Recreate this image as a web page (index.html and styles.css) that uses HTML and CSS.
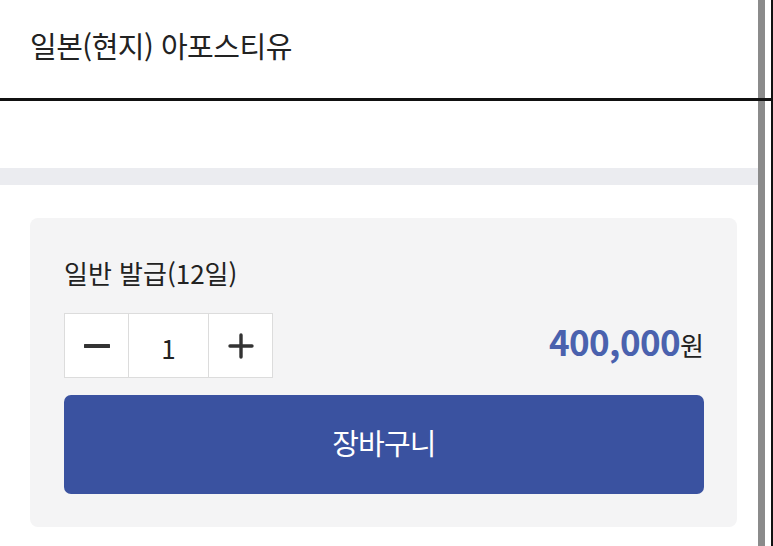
FILE: index.html
```html
<!DOCTYPE html>
<html lang="ko">
<head>
<meta charset="utf-8">
<title>일본(현지) 아포스티유</title>
<link rel="stylesheet" href="styles.css">
</head>
<body>
<div class="frame">
  <header class="head">
    <h1 class="title">일본(현지) 아포스티유</h1>
  </header>
  <div class="rail-gray"></div>
  <div class="rail-black"></div>
  <div class="hline"></div>
  <main class="main">
    <div class="spacer"></div>
    <div class="band"></div>
    <section class="card">
      <div class="label">일반 발급(12일)</div>
      <div class="row">
        <div class="stepper">
          <button class="step minus" type="button" aria-label="감소">
            <svg width="26" height="26" viewBox="0 0 26 26"><path d="M1 13H25" stroke="#333" stroke-width="3.8" stroke-linecap="round"/></svg>
          </button>
          <div class="qty">1</div>
          <button class="step plus" type="button" aria-label="증가">
            <svg width="26" height="26" viewBox="0 0 26 26"><path d="M2 13H24M13 2V24" stroke="#333" stroke-width="3.4" stroke-linecap="round"/></svg>
          </button>
        </div>
        <div class="price"><span class="amount">400,000</span><span class="won">원</span></div>
      </div>
      <button class="cart" type="button">장바구니</button>
    </section>
  </main>
</div>
</body>
</html>
```

FILE: styles.css
```css
* { box-sizing: border-box; }
html, body { margin: 0; padding: 0; background: #fff; }
body {
  font-family: "Noto Sans CJK KR", "Noto Sans", sans-serif;
  color: #222;
  width: 773px;
  height: 546px;
  overflow: hidden;
}
.frame {
  display: grid;
  grid-template-columns: 758px 7px 6px 2px;
  grid-template-rows: 98px 3px 445px;
  height: 546px;
}
.head {
  grid-column: 1;
  grid-row: 1;
  display: flex;
  align-items: center;
  padding: 0 0 8px 30px;
}
.title {
  margin: 0;
  font-size: 29px;
  font-weight: 400;
  letter-spacing: -0.5px;
  color: #222;
}
.rail-gray {
  grid-column: 2;
  grid-row: 1 / -1;
  background: #8b8b8b;
}
.rail-black {
  grid-column: 4;
  grid-row: 1 / -1;
  background: #111;
}
.hline {
  grid-column: 1 / -1;
  grid-row: 2;
  background: #111;
}
.main {
  grid-column: 1;
  grid-row: 3;
  display: flex;
  flex-direction: column;
}
.spacer { height: 67px; }
.band { height: 17px; background: #ebecf0; }
.card {
  margin: 33px 21px 0 30px;
  background: #f4f4f5;
  border-radius: 8px;
  padding: 37px 33px 33px 34px;
  display: flex;
  flex-direction: column;
}
.label {
  font-size: 26px;
  line-height: 36px;
  letter-spacing: 0;
  color: #222;
}
.row {
  margin-top: 22px;
  display: flex;
  align-items: center;
  justify-content: space-between;
}
.stepper {
  display: flex;
  height: 65px;
  border: 1px solid #dcdcdc;
  background: #fff;
}
.step {
  width: 64px;
  border: 0;
  padding: 0;
  background: #fff;
  display: flex;
  align-items: center;
  justify-content: center;
}
.minus { border-right: 1px solid #dcdcdc; }
.plus { border-left: 1px solid #dcdcdc; width: 64px; }
.qty {
  width: 79px;
  display: flex;
  align-items: center;
  justify-content: center;
  font-size: 26px;
  color: #222;
  padding-top: 4px;
}
.price {
  display: flex;
  align-items: baseline;
  padding-bottom: 10px;
}
.amount {
  font-size: 35px;
  font-weight: 700;
  color: #4a61ae;
  letter-spacing: -0.6px;
}
.won {
  font-size: 26px;
  color: #222;
  margin-left: 0;
}
.cart {
  margin-top: 17px;
  height: 99px;
  border: 0;
  border-radius: 7px;
  background: #3a52a0;
  color: #fff;
  font-family: "Noto Sans CJK KR", "Noto Sans", sans-serif;
  font-size: 29px;
  letter-spacing: -0.8px;
  padding: 0 0 6px;
}
```
